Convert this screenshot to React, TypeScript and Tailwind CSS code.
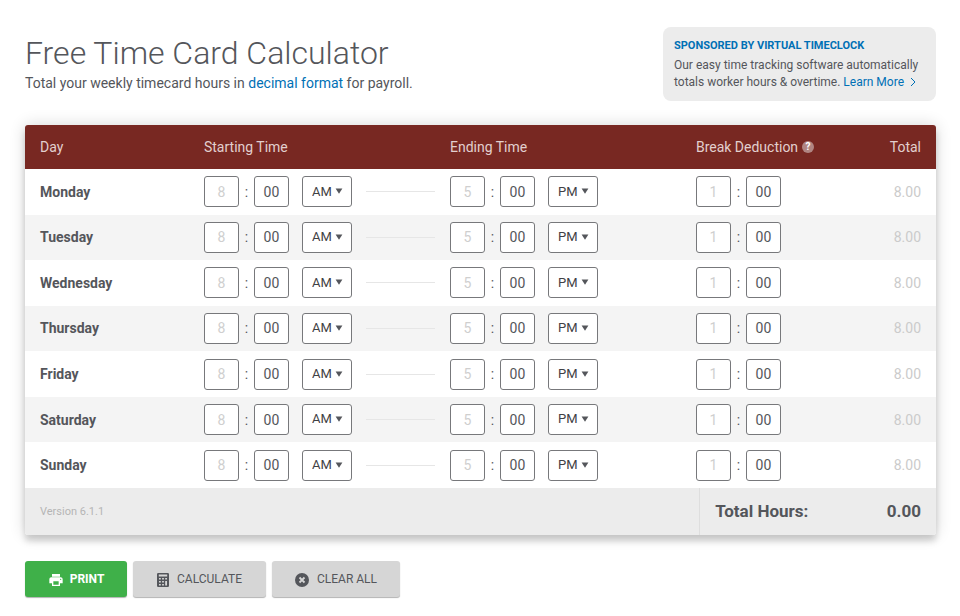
import React, { useState } from 'react';
import { MdPrint } from 'react-icons/md';

const DAYS = ['Monday', 'Tuesday', 'Wednesday', 'Thursday', 'Friday', 'Saturday', 'Sunday'];

interface TimeFieldsProps {
  label: string;
  hourHint: string;
}

const inputClass =
  'h-[31px] w-[35px] rounded-[3px] border border-[#77787b] bg-white p-0 text-center text-sm text-[#54565b] placeholder:text-[#cfcfcf] outline-none focus:border-[#0070b5]';

// hour and minute boxes with the colon between them
function TimeFields({ label, hourHint }: TimeFieldsProps) {
  return (
    <>
      <input type="text" aria-label={`${label} hours`} placeholder={hourHint} className={inputClass} />
      <span className="w-[15px] text-center">:</span>
      <input type="text" aria-label={`${label} minutes`} defaultValue="00" className={inputClass} />
    </>
  );
}

function PeriodSelect({ label, initial }: { label: string; initial: string }) {
  return (
    <div className="relative ml-[13px]">
      <select
        aria-label={label}
        defaultValue={initial}
        className="block h-[31px] w-[50px] appearance-none rounded-[3px] border border-[#77787b] bg-white pl-[9px] text-[13px] text-[#3f4145] outline-none"
      >
        <option>AM</option>
        <option>PM</option>
      </select>
      <svg viewBox="0 0 8 6" className="pointer-events-none absolute top-[12px] right-[9px] h-[6px] w-2 fill-[#54565b]">
        <path d="M0.6 0.6h6.8L4 5.8z" />
      </svg>
    </div>
  );
}

function CalculatorIcon() {
  return (
    <svg viewBox="0 0 12 14" className="h-[14px] w-3 fill-current">
      <path
        fillRule="evenodd"
        d="M1.2 0h9.6A1.2 1.2 0 0 1 12 1.2v11.6a1.2 1.2 0 0 1-1.2 1.2H1.2A1.2 1.2 0 0 1 0 12.8V1.2A1.2 1.2 0 0 1 1.2 0zM1.8 1.6v2h8.4v-2zM2 5v1.5h1.8V5zM5.1 5v1.5h1.8V5zM8.2 5v1.5H10V5zM2 8v1.5h1.8V8zM5.1 8v1.5h1.8V8zM2 11v1.4h1.8V11zM5.1 11v1.4h1.8V11zM8.2 8v4.4H10V8z"
      />
    </svg>
  );
}

function ClearIcon() {
  return (
    <svg viewBox="0 0 14 14" className="size-[14px]">
      <circle cx="7" cy="7" r="7" className="fill-current" />
      <path d="M4.5 4.5l5 5M9.5 4.5l-5 5" fill="none" stroke="#d6d6d6" strokeWidth="1.8" />
    </svg>
  );
}

export default function App() {
  const [formKey, setFormKey] = useState(0);

  return (
    <main className="min-h-screen bg-white pt-[27px] pr-6 pb-4 pl-[25px] font-['Roboto',sans-serif] text-sm text-[#54565b] antialiased">
      <header className="flex items-start justify-between">
        <div className="pt-1">
          <h1 className="text-[32px] leading-[44px] font-light">Free Time Card Calculator</h1>
          <p className="leading-4">
            Total your weekly timecard hours in{' '}
            <a href="#decimal" className="text-[#0070b5]">decimal format</a> for payroll.
          </p>
        </div>
        <aside className="w-[273px] rounded-lg bg-[#ececec] px-[11px] py-[10px] text-[12px] leading-[17px]">
          <h2 className="mb-[3px] text-[11px] font-bold text-[#0070b5]">SPONSORED BY VIRTUAL TIMECLOCK</h2>
          <p>
            Our easy time tracking software automatically totals worker hours &amp; overtime.{' '}
            <a href="#learn" className="whitespace-nowrap text-[#0070b5]">
              Learn More
              <svg viewBox="0 0 6 10" className="ml-[6px] inline h-[10px] w-[6px] fill-none stroke-current align-[-1px]">
                <path d="M1 1l4 4-4 4" />
              </svg>
            </a>
          </p>
        </aside>
      </header>

      <form key={formKey} className="mt-6" onSubmit={(e) => e.preventDefault()}>
        <div className="overflow-hidden rounded-[3px] shadow-[0_6px_6px_rgba(0,0,0,0.16),0_0_16px_rgba(0,0,0,0.16)]">
          <table className="w-full table-fixed border-collapse text-left">
            <thead>
              <tr className="h-11 bg-[#782822] text-[#e2cfce]">
                <th className="w-[18%] pl-[15px] font-normal">Day</th>
                <th className="w-[27%] pl-[15px] font-normal">Starting Time</th>
                <th className="w-[27%] pl-[15px] font-normal">Ending Time</th>
                <th className="w-[18%] pl-[15px] font-normal">
                  <span className="flex items-center gap-1">
                    Break Deduction
                    <span className="flex size-3 items-center justify-center rounded-full bg-[#b08582] text-[10px] leading-3 font-bold text-white">
                      ?
                    </span>
                  </span>
                </th>
                <th className="w-[10%] pr-[15px] text-right font-normal">Total</th>
              </tr>
            </thead>
            <tbody className="h-[319px]">
              {DAYS.map((day) => (
                <tr key={day} className="bg-white even:bg-[#f4f4f4]">
                  <th scope="row" className="pl-[15px] font-bold">{day}</th>
                  <td className="pl-[15px]">
                    <div className="flex items-center">
                      <TimeFields label={`${day} start`} hourHint="8" />
                      <PeriodSelect label={`${day} start period`} initial="AM" />
                      <span className="ml-[14px] h-px flex-1 bg-[#e6e6e6]" />
                    </div>
                  </td>
                  <td className="pl-[15px]">
                    <div className="flex items-center">
                      <TimeFields label={`${day} end`} hourHint="5" />
                      <PeriodSelect label={`${day} end period`} initial="PM" />
                    </div>
                  </td>
                  <td className="pl-[15px]">
                    <div className="flex items-center">
                      <TimeFields label={`${day} break`} hourHint="1" />
                    </div>
                  </td>
                  <td className="pr-[15px] text-right text-[#cbcbcb]">8.00</td>
                </tr>
              ))}
            </tbody>
          </table>
          <div className="flex h-[47px] items-stretch bg-[#ececec]">
            <div className="flex flex-1 items-center pl-[15px] text-[11px] text-[#b5b5b5]">Version 6.1.1</div>
            <div className="flex w-[26%] items-center justify-between border-l border-[#dedede] px-[15px] text-[17px] font-bold">
              <span>Total Hours:</span>
              <output>0.00</output>
            </div>
          </div>
        </div>

        <div className="mt-[26px] flex gap-[6px] text-[12px]">
          <button
            type="button"
            onClick={() => window.print()}
            className="flex h-9 w-[102px] items-center justify-center gap-[6px] rounded-[3px] bg-[#3fb049] pt-[2px] font-bold text-white shadow-[0_1px_1px_rgba(0,0,0,0.3)]"
          >
            <MdPrint className="size-4" />
            PRINT
          </button>
          <button
            type="submit"
            className="flex h-9 w-[133px] items-center justify-center gap-2 rounded-[3px] bg-[#d6d6d6] pt-[2px] shadow-[0_1px_1px_rgba(0,0,0,0.3)]"
          >
            <CalculatorIcon />
            CALCULATE
          </button>
          <button
            type="button"
            onClick={() => setFormKey(formKey + 1)}
            className="flex h-9 w-[128px] items-center justify-center gap-2 rounded-[3px] bg-[#d6d6d6] pt-[2px] shadow-[0_1px_1px_rgba(0,0,0,0.3)]"
          >
            <ClearIcon />
            CLEAR ALL
          </button>
        </div>
      </form>
    </main>
  );
}
